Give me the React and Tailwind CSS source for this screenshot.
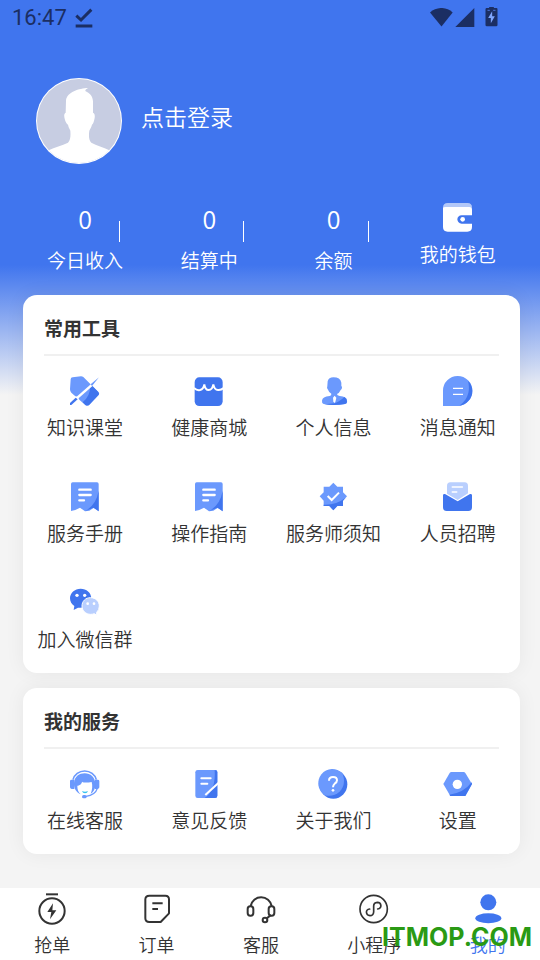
import { useState } from 'react';

const LIGHT = '#6b99fd';
const BLUE = '#4075ee';
const PALE = '#b9cffe';

function Icon({ children, className = 'size-[30px]' }) {
  return (
    <svg viewBox="0 0 90 90" fill="none" aria-hidden="true" className={`${className} overflow-visible shrink-0`}>
      {children}
    </svg>
  );
}

/* ---------- status bar ---------- */

function StatusBar() {
  return (
    <div className="flex items-center justify-between h-9 pl-3 pr-[42px] text-[#1b2e63]">
      <div className="flex items-center gap-2">
        <span className="font-[Roboto] text-[22px] leading-6 font-normal">16:47</span>
        <svg viewBox="0 0 54 60" fill="none" className="w-[18px] h-5">
          <path d="M4 23 L18 36 L49 5" stroke="currentColor" strokeWidth="9" />
          <path d="M2 54 H52" stroke="currentColor" strokeWidth="9" />
        </svg>
      </div>
      <div className="flex items-center gap-[2px]">
        <svg viewBox="0 0 70 60" fill="currentColor" className="w-[23px] h-5">
          <path d="M0 13 C20 -5 50 -5 69 13 L35 56 Z" />
        </svg>
        <svg viewBox="0 0 60 60" fill="currentColor" className="size-5">
          <path d="M58 0 V57 H1 Z" />
        </svg>
        <svg viewBox="0 0 38 60" fill="currentColor" className="w-[13px] h-5 ml-2 overflow-visible">
          <path d="M12 -3 H26 V0 H34 Q37 0 37 4 V51 Q37 55 33 55 H5 Q1 55 1 51 V4 Q1 0 5 0 H12 Z" />
          <path d="M21 10 L9 30 H17 V46 L29 25 H21 Z" fill="#7ea4fb" />
          <path d="M7 7 H14 M24 7 H31" stroke="#4d75d8" strokeWidth="3" />
        </svg>
      </div>
    </div>
  );
}

function Avatar() {
  return (
    <svg viewBox="0 0 258 258" className="size-[86px] shrink-0" role="img" aria-label="头像">
      <defs>
        <clipPath id="avatar">
          <circle cx="129" cy="129" r="126" />
        </clipPath>
      </defs>
      <circle cx="129" cy="129" r="129" fill="#fff" />
      <g clipPath="url(#avatar)">
        <rect width="258" height="258" fill="#c7cde2" />
        <path
          fill="#fff"
          d="M156 30 C130 31 92 42 90 68 L89 104 C83 106 84 118 87 126 C89 132 92 138 96 140 C98 150 102 154 103 158
             C104 172 104 186 96 194 C78 202 56 208 38 217 L38 258 H220 V217 C202 208 182 202 166 194
             C158 186 158 172 160 158 C163 152 166 148 168 140 C172 138 174 130 176 120 C177 112 176 105 171 104
             L171 70 C170 52 160 46 149 40 C146 36 150 34 156 30 Z"
        />
      </g>
    </svg>
  );
}

/* ---------- tool icons ---------- */

function ClassIcon() {
  return (
    <Icon>
      <path d="M2 10 Q2 4 8 4 L33 1 Q37 1 40 3 L85 48 Q90 53 85 58 L58 86 Q52 91 46 87 L4 50 Q0 46 0 40 Z" fill={LIGHT} />
      <path d="M65 28 L85 48 Q90 53 85 58 L58 86 Q52 91 46 87 L38 79 Q61 60 60 34 Z" fill={BLUE} />
      <path d="M66 22 L70 28 L24 68 L18 64 Z" fill="#fff" />
      <path d="M87 4 L62 25 L66 30 Z" fill={LIGHT} />
      <path d="M-4 84 L18 60 L28 70 L8 92 H-4 Z" fill="#fff" />
      <path d="M0 81 L17 65 L23 70 L4 87 H0 Z" fill={BLUE} />
    </Icon>
  );
}

function ShopIcon() {
  return (
    <Icon>
      <rect x="2" y="4" width="84" height="86" rx="14" fill={BLUE} />
      <path d="M0 36 Q9 44 18 42 Q29 39 31 25 Q33 42 44 42 Q55 42 58 25 Q61 42 72 42 Q81 43 89 36" stroke="#fff" strokeWidth="6" />
    </Icon>
  );
}

function PersonIcon() {
  return (
    <Icon>
      <path
        d="M26 16 Q29 4 43 4 Q64 4 67 20 L67 30 Q71 32 68 39 L65 42 Q61 51 54 54 Q54 58 62 60 Q84 62 84 74
           Q86 83 78 84 Q46 90 14 84 Q8 82 9 74 Q10 62 32 60 Q38 58 37 53 Q29 48 27 41 Q22 38 25 30 Z"
        fill={LIGHT}
      />
      <path d="M48 82 Q68 72 76 63 Q84 68 84 76 Q84 83 78 84 Q46 90 16 85 Z" fill={BLUE} />
      <path d="M47 59 L52 65 L49 78 L46 81 L43 76 L42 65 Z" fill="#fff" />
    </Icon>
  );
}

function MessageIcon() {
  return (
    <Icon>
      <path d="M0 44 A44 44 0 0 1 88 44 A46 46 0 0 1 48 90 H0 Z" fill={LIGHT} />
      <path d="M75 14 A44 44 0 0 1 88 44 A46 46 0 0 1 48 90 C82 66 80 34 75 14 Z" fill={BLUE} />
      <path d="M30 37 H60 M30 55 H60" stroke="#fff" strokeWidth="4" />
    </Icon>
  );
}

function ManualIcon() {
  return (
    <Icon>
      <path d="M3 6 Q3 1 8 1 H81 Q86 1 86 6 V88 L72 77 L58 86 L45 88 L30 77 L16 84 L3 87 Z" fill={LIGHT} />
      <path d="M86 26 V88 L70 77 L45 88 Q79 68 86 26 Z" fill={BLUE} />
      <path d="M28 23 H62 M28 39 H62 M28 55 H42" stroke="#fff" strokeWidth="7" strokeLinecap="round" />
    </Icon>
  );
}

function NoticeIcon() {
  return (
    <Icon>
      <path d="M43 2 L55 14 H72 V31 L84 43 L72 56 V72 H55 L43 85 L31 72 H14 V56 L2 43 L14 31 V14 H31 Z" fill={LIGHT} />
      <path d="M80 47 L72 56 V72 H55 L43 85 L31 72 H14 V68 Q50 70 80 47 Z" fill={BLUE} />
      <path d="M26 42 L38 54 L60 32" stroke="#fff" strokeWidth="6" />
    </Icon>
  );
}

function RecruitIcon() {
  return (
    <Icon>
      <path d="M0 40 Q0 35 6 36 L44 58 L81 36 Q87 35 87 40 V76 Q87 87 76 87 H11 Q0 87 0 76 Z" fill={BLUE} />
      <path d="M12 12 Q12 1 22 1 H65 Q75 1 75 12 V34 L44 54 L12 35 Z" fill={PALE} />
      <path d="M28 15 H58 M28 30 H41" stroke="#fff" strokeWidth="5" strokeLinecap="round" />
    </Icon>
  );
}

function WechatIcon() {
  return (
    <Icon>
      <path d="M32 2 C14 2 0 15 0 31 C0 41 5 49 13 54 L11 66 L24 59 C48 62 64 48 64 31 C64 14 49 2 32 2 Z" fill={BLUE} />
      <path d="M62 29 C46 29 36 40 36 54 C36 69 48 79 62 79 Q68 79 73 77 L80 82 L80 73 Q88 66 88 54 C88 40 77 29 62 29 Z" fill={PALE} stroke="#fff" strokeWidth="3" />
      <circle cx="21" cy="22" r="5" fill="#fff" />
      <circle cx="44" cy="22" r="5" fill="#fff" />
      <circle cx="53" cy="47" r="4" fill="#fff" />
      <circle cx="72" cy="47" r="4" fill="#fff" />
    </Icon>
  );
}

function ServiceIcon() {
  return (
    <Icon>
      <path d="M9 32 A36 34 0 0 1 79 32" stroke={LIGHT} strokeWidth="5" />
      <path d="M0 36 Q0 32 5 32 H13 V60 H5 Q0 59 0 55 Z M88 36 Q88 32 83 32 H75 V60 H83 Q88 59 88 55 Z" fill={LIGHT} />
      <path
        d="M12 42 C14 22 28 13 44 13 C62 13 75 25 76 44 C77 56 72 68 62 74 C67 62 68 50 65 39 C53 41 42 42 36 38
           C36 45 27 50 22 50 C22 60 24 69 32 76 C19 70 11 58 12 42 Z"
        fill={LIGHT}
      />
      <path d="M82 58 Q76 78 48 82" stroke={LIGHT} strokeWidth="4" />
      <rect x="36" y="78" width="14" height="10" rx="5" fill={LIGHT} />
      <path d="M36 66 Q45 70 54 66 Q52 73 45 73 Q38 73 36 66 Z" fill="#35c3ee" />
    </Icon>
  );
}

function FeedbackIcon() {
  return (
    <Icon>
      <rect x="4" y="3" width="66" height="84" rx="7" fill={LIGHT} />
      <path d="M62 3 Q70 3 70 10 V80 Q70 87 63 87 H32 Q66 64 62 3 Z" fill={BLUE} />
      <path d="M22 28 H50 M22 44 H40" stroke="#fff" strokeWidth="6" strokeLinecap="round" />
      <path d="M34 78 L74 41" stroke="#fff" strokeWidth="6" />
    </Icon>
  );
}

function AboutIcon() {
  return (
    <Icon>
      <ellipse cx="43" cy="46" rx="42" ry="43" fill={BLUE} />
      <path d="M70 13 A42 43 0 1 0 17 79 C54 88 88 56 70 13 Z" fill={LIGHT} />
      <path d="M30 35 Q30 24 42 24 Q54 24 54 34 Q54 40 47 44 Q42 48 42 55" stroke="#fff" strokeWidth="6" />
      <circle cx="42" cy="64" r="4" fill="#fff" />
    </Icon>
  );
}

function SettingsIcon() {
  return (
    <Icon>
      <path d="M25 9 H62 Q65 9 67 12 L87 45 L67 81 H22 L1 45 L20 12 Q22 9 25 9 Z" fill={LIGHT} />
      <path d="M86 40 L87 45 L67 81 H22 L19 77 Q62 72 86 40 Z" fill={BLUE} />
      <circle cx="43" cy="46" r="14" fill="#fff" />
    </Icon>
  );
}

function WalletIcon() {
  return (
    <Icon>
      <path d="M0 20 V14 Q0 0 14 0 H74 Q87 0 87 14 V30 H0 Z" fill="#b3c8f8" />
      <path d="M0 14 Q2 12 8 12 H79 Q87 13 87 22 V37 H56 Q44 38 43 49 Q44 61 56 62 H87 V72 Q87 86 73 86 H14 Q0 86 0 72 Z" fill="#fff" />
      <circle cx="59" cy="49" r="7" fill="#fff" />
    </Icon>
  );
}

/* ---------- tab icons ---------- */

function GrabIcon() {
  return (
    <Icon>
      <path d="M27 1 H63" stroke="currentColor" strokeWidth="6" />
      <circle cx="45" cy="51" r="38" stroke="currentColor" strokeWidth="6" />
      <path d="M48 28 L31 54 H43 L39 76 L58 49 H46 Z" fill="currentColor" />
    </Icon>
  );
}

function OrderIcon() {
  return (
    <Icon>
      <path d="M22 5 H70 Q81 5 81 16 V58 L56 84 H22 Q10 84 10 73 V16 Q10 5 22 5 Z" stroke="currentColor" strokeWidth="6" strokeLinejoin="round" />
      <path d="M31 28 H62 M31 45 H48" stroke="currentColor" strokeWidth="6" />
    </Icon>
  );
}

function HeadsetIcon() {
  return (
    <Icon>
      <path d="M14 36 A32 32 0 0 1 77 36" stroke="currentColor" strokeWidth="6" />
      <rect x="5" y="37" width="17" height="28" rx="8" stroke="currentColor" strokeWidth="6" />
      <rect x="68" y="37" width="17" height="28" rx="8" stroke="currentColor" strokeWidth="6" />
      <circle cx="57" cy="78" r="7" stroke="currentColor" strokeWidth="6" />
      <path d="M62 73 L75 63" stroke="currentColor" strokeWidth="6" />
    </Icon>
  );
}

function MiniProgramIcon() {
  return (
    <Icon>
      <circle cx="44" cy="45" r="41" stroke="currentColor" strokeWidth="5" />
      <path d="M56 45 C70 43 68 25 55 25 Q44 26 44 36 V54 Q43 65 33 65 C20 64 18 47 32 45" stroke="currentColor" strokeWidth="5" strokeLinecap="round" />
    </Icon>
  );
}

function MeIcon() {
  return (
    <Icon>
      <circle cx="46" cy="25" r="24" fill="currentColor" />
      <ellipse cx="46" cy="73" rx="39" ry="15" fill="currentColor" />
    </Icon>
  );
}

const stats = [
  { label: '今日收入', value: 0 },
  { label: '结算中', value: 0 },
  { label: '余额', value: 0 },
];

const tools = [
  { label: '知识课堂', icon: ClassIcon },
  { label: '健康商城', icon: ShopIcon },
  { label: '个人信息', icon: PersonIcon },
  { label: '消息通知', icon: MessageIcon },
  { label: '服务手册', icon: ManualIcon },
  { label: '操作指南', icon: ManualIcon },
  { label: '服务师须知', icon: NoticeIcon },
  { label: '人员招聘', icon: RecruitIcon },
  { label: '加入微信群', icon: WechatIcon },
];

const services = [
  { label: '在线客服', icon: ServiceIcon },
  { label: '意见反馈', icon: FeedbackIcon },
  { label: '关于我们', icon: AboutIcon },
  { label: '设置', icon: SettingsIcon },
];

const tabs = [
  { label: '抢单', icon: GrabIcon },
  { label: '订单', icon: OrderIcon },
  { label: '客服', icon: HeadsetIcon },
  { label: '小程序', icon: MiniProgramIcon },
  { label: '我的', icon: MeIcon },
];

function Card({ title, items }) {
  return (
    <section className="bg-white rounded-[14px] shadow-[0_0_20px_rgba(0,0,0,0.06)]">
      <h2 className="mx-[21px] pt-[19px] pb-3 border-b-2 border-[#f0f0f0] text-[19px] leading-7 font-bold text-[#333]">{title}</h2>
      <div className="grid grid-cols-4 gap-y-px">
        {items.map(({ label, icon: ItemIcon }) => (
          <button key={label} type="button" className="flex flex-col items-center gap-[7px] py-5 cursor-pointer">
            <ItemIcon />
            <span className="text-[19px] leading-7 text-[#333] whitespace-nowrap">{label}</span>
          </button>
        ))}
      </div>
    </section>
  );
}

export default function App() {
  const [active, setActive] = useState('我的');

  return (
    <div className="min-h-screen flex flex-col bg-[#f4f4f4] font-['Noto_Sans_CJK_SC',sans-serif] font-[350]">
      <main className="flex-1 pb-8 bg-[linear-gradient(#4075ee_0px,#4075ee_265px,#f4f4f4_395px)]">
        <StatusBar />

        <button type="button" className="flex items-center gap-[19px] ml-9 mt-[42px] cursor-pointer">
          <Avatar />
          <span className="pb-[10px] text-[23px] leading-8 text-white">点击登录</span>
        </button>

        <div className="grid grid-cols-4 pl-[23px] pr-5 mt-[39px] text-white">
          {stats.map((s) => (
            <div key={s.label} className="flex flex-col items-center">
              <div className="flex w-full h-[39px]">
                <span className="flex-1" />
                <span className="text-[25px] leading-[30px]">{s.value}</span>
                <span className="flex-1 flex justify-center items-end">
                  <span className="w-px h-[21px] bg-white" />
                </span>
              </div>
              <span className="mt-1 text-[19px] leading-7">{s.label}</span>
            </div>
          ))}
          <button type="button" className="flex flex-col items-center gap-[7px] cursor-pointer">
            <WalletIcon />
            <span className="text-[19px] leading-7">我的钱包</span>
          </button>
        </div>

        <div className="flex flex-col gap-[15px] pl-[23px] pr-5 mt-[21px]">
          <Card title="常用工具" items={tools} />
          <Card title="我的服务" items={services} />
        </div>
      </main>

      <nav className="relative flex justify-around bg-white pt-[6px] pb-1">
        {tabs.map(({ label, icon: TabIcon }) => (
          <button
            key={label}
            type="button"
            onClick={() => setActive(label)}
            className={`flex flex-col items-center gap-2 cursor-pointer ${active === label ? 'text-[#4075ee]' : 'text-[#333]'}`}
          >
            <TabIcon />
            <span className="text-[18px] leading-6">{label}</span>
          </button>
        ))}
        <span className="absolute right-2 bottom-[5px] font-[Inter] text-[25px] leading-9 font-bold text-[#2a9a14] pointer-events-none">
          ITMOP.COM
        </span>
      </nav>
    </div>
  );
}
